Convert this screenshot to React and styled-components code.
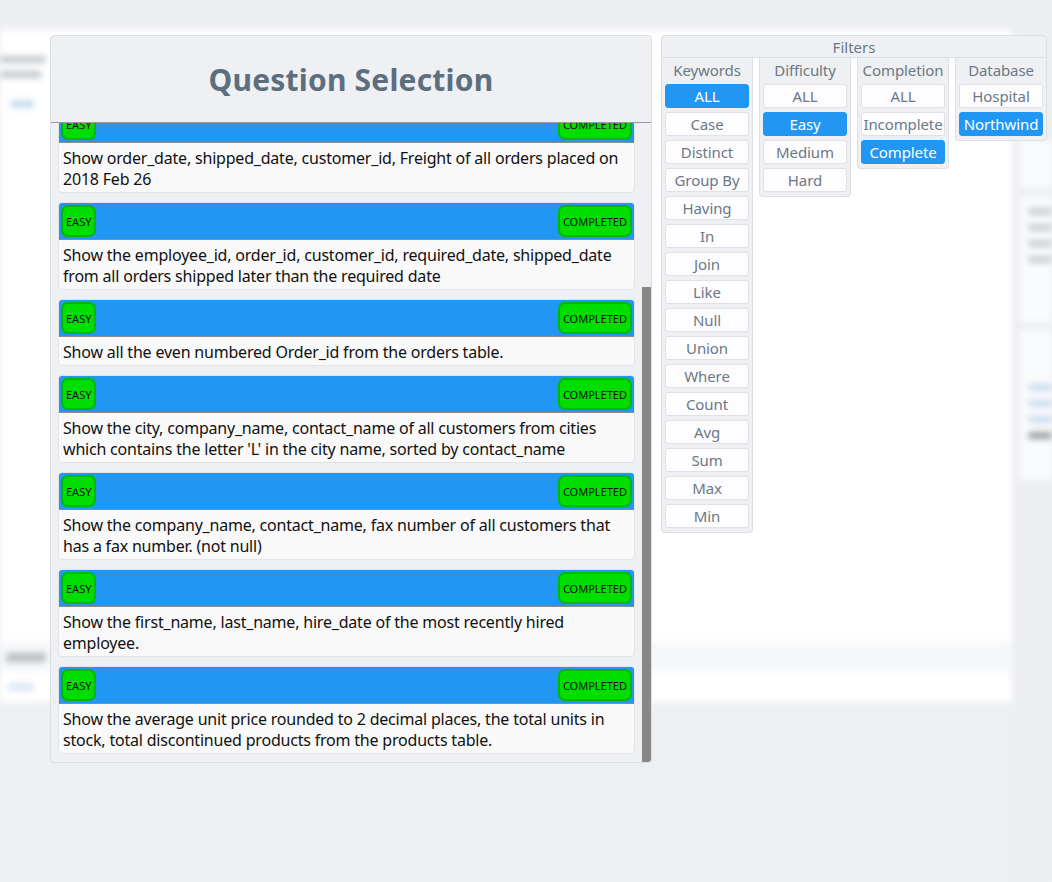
import { useLayoutEffect, useRef } from 'react'
import styled, { createGlobalStyle } from 'styled-components'

const Global = createGlobalStyle`
  html, body { margin: 0; padding: 0; }
  body {
    width: 1052px;
    height: 882px;
    overflow: hidden;
    background: #edf0f3;
    font-family: "Noto Sans", "Open Sans", sans-serif;
  }
  * { box-sizing: border-box; }
`

/* ---------- blurred page behind the modal ---------- */

const Page = styled.div`
  position: relative;
  width: 1052px;
  height: 882px;
  overflow: hidden;
`

const Behind = styled.div`
  display: flex;
  width: 1052px;
  height: 882px;
  filter: blur(3px);
`

const MainCol = styled.div`
  flex: 1;
  display: flex;
  flex-direction: column;
`

const TopBar = styled.div`
  height: 30px;
  background: #eceef1;
`

const WhiteSection = styled.div`
  height: 612px;
  background: #ffffff;
  padding: 26px 0 0 0;
  display: flex;
  flex-direction: column;
  gap: 8px;
`

const BlurLine = styled.div`
  height: ${p => p.$h || 7}px;
  width: ${p => p.$w}px;
  margin-left: ${p => p.$x || 0}px;
  margin-top: ${p => p.$mt || 0}px;
  background: ${p => p.$c || '#c3c7cc'};
  border-radius: 3px;
`

const Band = styled.div`
  height: 60px;
  display: flex;
  flex-direction: column;
`

const BandRow = styled.div`
  height: 30px;
  background: ${p => p.$bg};
  display: flex;
  align-items: center;
`

const SideCol = styled.div`
  width: 40px;
  background: #eceef1;
  padding: 140px 0 0 8px;
  display: flex;
  flex-direction: column;
  gap: 8px;
`

const SideCard = styled.div`
  height: ${p => p.$h}px;
  background: #fafbfc;
  padding: 12px 0 0 8px;
  display: flex;
  flex-direction: column;
  gap: 9px;
`

/* ---------- modal ---------- */

const Overlay = styled.div`
  position: absolute;
  inset: 0;
  display: flex;
  align-items: flex-start;
  padding: 35px 0 0 50px;
  gap: 9px;
`

const Panel = styled.div`
  width: 602px;
  height: 728px;
  background: #eef0f3;
  border: 1px solid #dcdfe3;
  border-radius: 4px;
  display: flex;
  flex-direction: column;
  overflow: hidden;
`

const PanelHeader = styled.div`
  height: 87px;
  flex: none;
  display: flex;
  align-items: center;
  justify-content: center;
  border-bottom: 1px solid #9a9a9a;
`

const Title = styled.h1`
  margin: 0;
  font-size: 30px;
  font-weight: 700;
  color: #5d6e7e;
  letter-spacing: 0.2px;
`

const ListWrap = styled.div`
  flex: 1;
  min-height: 0;
  display: flex;
`

const List = styled.div`
  position: relative;
  flex: 1;
  overflow: hidden;
  padding: 8px 7px 8px 7px;
  display: flex;
  flex-direction: column;
  gap: 9px;
`

const Track = styled.div`
  width: 9px;
  flex: none;
  display: flex;
  flex-direction: column;
`

const Thumb = styled.div`
  margin-top: ${p => p.$top}px;
  height: ${p => p.$size}px;
  background: #888;
`

const Card = styled.div`
  flex: none;
  border: 1px solid #e2e4e7;
  border-radius: 4px;
  overflow: hidden;
  background: #f9f9f9;
`

const CardHead = styled.div`
  height: 37px;
  background: #2196f3;
  border-bottom: 1px solid #8c8c8c;
  display: flex;
  align-items: center;
  justify-content: space-between;
  padding: 0 2px;
`

const Badge = styled.span`
  height: 32px;
  display: flex;
  align-items: center;
  padding: 1px 3px 0;
  background: #00dd00;
  border: 2px solid #00b900;
  border-radius: 7px;
  font-size: 11px;
  color: #111;
  text-transform: uppercase;
`

const CardBody = styled.p`
  margin: 0;
  padding: 5px 4px 2px;
  font-size: 16px;
  line-height: 21px;
  letter-spacing: -0.2px;
  color: #111;
`

const Filters = styled.div`
  width: 386px;
  display: flex;
  flex-direction: column;
`

const FiltersHead = styled.div`
  height: 23px;
  background: #eef0f3;
  border: 1px solid #dcdfe3;
  border-radius: 4px 4px 0 0;
  display: flex;
  align-items: center;
  justify-content: center;
  font-size: 15px;
  color: #6b7886;
`

const Columns = styled.div`
  display: flex;
  gap: 6px;
  align-items: flex-start;
`

const Column = styled.div`
  width: 92px;
  background: #eef0f3;
  border: 1px solid #dcdfe3;
  border-top: none;
  border-radius: 0 0 4px 4px;
  padding: 0 3px 4px;
  display: flex;
  flex-direction: column;
  gap: 4px;
`

const ColTitle = styled.div`
  height: 22px;
  padding-top: 2px;
  display: flex;
  align-items: center;
  justify-content: center;
  font-size: 15px;
  letter-spacing: -0.1px;
  color: #6b7886;
  white-space: nowrap;
`

const FilterBtn = styled.button`
  height: 24px;
  width: 100%;
  padding: 0;
  border: 1px solid ${p => (p.$on ? '#2196f3' : '#dfe1e5')};
  border-radius: 3px;
  background: ${p => (p.$on ? '#2196f3' : '#fdfcff')};
  color: ${p => (p.$on ? '#ffffff' : '#6b7886')};
  font-family: inherit;
  font-size: 15px;
  letter-spacing: -0.1px;
  line-height: 22px;
  white-space: nowrap;
  cursor: pointer;
`

const questions = [
  'Show the category_name and description from the categories table sorted by category_name.',
  "Show all the contact_name, address, city of all customers which are not from 'Germany', 'Mexico', 'Spain'",
  'Show order_date, shipped_date, customer_id, Freight of all orders placed on 2018 Feb 26',
  'Show the employee_id, order_id, customer_id, required_date, shipped_date from all orders shipped later than the required date',
  'Show all the even numbered Order_id from the orders table.',
  "Show the city, company_name, contact_name of all customers from cities which contains the letter 'L' in the city name, sorted by contact_name",
  'Show the company_name, contact_name, fax number of all customers that has a fax number. (not null)',
  'Show the first_name, last_name, hire_date of the most recently hired employee.',
  'Show the average unit price rounded to 2 decimal places, the total units in stock, total discontinued products from the products table.',
]

const filterCols = [
  { title: 'Keywords', items: ['ALL', 'Case', 'Distinct', 'Group By', 'Having', 'In', 'Join', 'Like', 'Null', 'Union', 'Where', 'Count', 'Avg', 'Sum', 'Max', 'Min'], on: 'ALL' },
  { title: 'Difficulty', items: ['ALL', 'Easy', 'Medium', 'Hard'], on: 'Easy' },
  { title: 'Completion', items: ['ALL', 'Incomplete', 'Complete'], on: 'Complete' },
  { title: 'Database', items: ['Hospital', 'Northwind'], on: 'Northwind' },
]

function QuestionCard({ text, cardRef }) {
  return (
    <Card ref={cardRef}>
      <CardHead>
        <Badge>Easy</Badge>
        <Badge>Completed</Badge>
      </CardHead>
      <CardBody>{text}</CardBody>
    </Card>
  )
}

export default function App() {
  const listRef = useRef(null)
  const targetRef = useRef(null)

  // the list is shown scrolled so the third question's header peeks above the fold
  useLayoutEffect(() => {
    const list = listRef.current
    const target = targetRef.current
    if (list && target) list.scrollTop = target.offsetTop + 19
  }, [])

  return (
    <Page>
      <Global />
      <Behind>
        <MainCol>
          <TopBar />
          <WhiteSection>
            <BlurLine $w={46} />
            <BlurLine $w={42} />
            <BlurLine $w={24} $x={10} $mt={14} $h={8} $c="#c5dcf0" />
          </WhiteSection>
          <Band>
            <BandRow $bg="#f6f7f9">
              <BlurLine $w={40} $x={6} $h={9} $c="#b9bdc2" />
            </BandRow>
            <BandRow $bg="#ffffff">
              <BlurLine $w={26} $x={8} $h={8} $c="#dbe6f5" />
            </BandRow>
          </Band>
        </MainCol>
        <SideCol>
          <SideCard $h={48} />
          <SideCard $h={126}>
            <BlurLine $w={24} $c="#c8ccd1" />
            <BlurLine $w={24} $c="#c8ccd1" />
            <BlurLine $w={24} $c="#c8ccd1" />
            <BlurLine $w={24} $c="#c8ccd1" />
          </SideCard>
          <SideCard $h={150}>
            <BlurLine $w={24} $mt={42} $c="#c8dcf2" />
            <BlurLine $w={24} $c="#c8dcf2" />
            <BlurLine $w={24} $c="#c8dcf2" />
            <BlurLine $w={24} $c="#9a9da1" />
          </SideCard>
        </SideCol>
      </Behind>

      <Overlay>
        <Panel>
          <PanelHeader>
            <Title>Question Selection</Title>
          </PanelHeader>
          <ListWrap>
            <List ref={listRef}>
              {questions.map((q, i) => (
                <QuestionCard key={i} text={q} cardRef={i === 2 ? targetRef : undefined} />
              ))}
            </List>
            <Track>
              <Thumb $top={164} $size={476} />
            </Track>
          </ListWrap>
        </Panel>

        <Filters>
          <FiltersHead>Filters</FiltersHead>
          <Columns>
            {filterCols.map(col => (
              <Column key={col.title}>
                <ColTitle>{col.title}</ColTitle>
                {col.items.map(item => (
                  <FilterBtn key={item} $on={item === col.on}>{item}</FilterBtn>
                ))}
              </Column>
            ))}
          </Columns>
        </Filters>
      </Overlay>
    </Page>
  )
}
